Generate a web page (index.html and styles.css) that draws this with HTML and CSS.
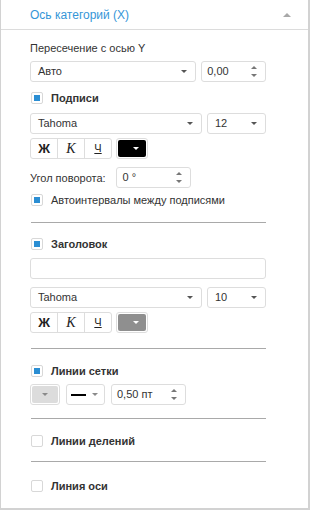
FILE: index.html
```html
<!DOCTYPE html>
<html lang="ru">
<head>
  <meta charset="UTF-8">
  <title>Ось категорий</title>
  <link rel="stylesheet" href="styles.css">
</head>
<body>
  <div class="panel">
    <div class="panel-header">
      <span class="panel-title">Ось категорий (X)</span>
      <span class="collapse-arrow"></span>
    </div>

    <div class="panel-body">
      <div class="label cross-label">Пересечение с осью Y</div>
      <div class="row row-cross">
        <div class="select select-wide">Авто</div>
        <div class="spinner spinner-cross">0,00</div>
      </div>

      <label class="check check-labels"><span class="box on"></span>Подписи</label>
      <div class="row row-font">
        <div class="select select-font">Tahoma</div>
        <div class="select select-size">12</div>
      </div>
      <div class="row row-style">
        <div class="style-group">
          <span class="style-btn bold">Ж</span>
          <span class="style-btn italic">К</span>
          <span class="style-btn under">Ч</span>
        </div>
        <div class="color-btn"><span class="swatch black"></span></div>
      </div>
      <div class="row row-angle">
        <span class="label">Угол поворота:</span>
        <div class="spinner spinner-angle">0 °</div>
      </div>
      <label class="check check-plain check-auto"><span class="box on"></span>Автоинтервалы между подписями</label>

      <div class="sep sep-1"></div>

      <label class="check check-title"><span class="box on"></span>Заголовок</label>
      <div class="text-input"></div>
      <div class="row row-font2">
        <div class="select select-font">Tahoma</div>
        <div class="select select-size">10</div>
      </div>
      <div class="row row-style">
        <div class="style-group">
          <span class="style-btn bold">Ж</span>
          <span class="style-btn italic">К</span>
          <span class="style-btn under">Ч</span>
        </div>
        <div class="color-btn"><span class="swatch grey"></span></div>
      </div>

      <div class="sep sep-2"></div>

      <label class="check check-grid"><span class="box on"></span>Линии сетки</label>
      <div class="row row-grid">
        <div class="color-btn color-small"><span class="swatch light"></span></div>
        <div class="line-btn"><span class="line-sample"></span></div>
        <div class="spinner spinner-width">0,50 пт</div>
      </div>

      <div class="sep sep-3"></div>

      <label class="check check-ticks"><span class="box"></span>Линии делений</label>

      <div class="sep sep-4"></div>

      <label class="check check-axis"><span class="box"></span>Линия оси</label>
    </div>
  </div>
</body>
</html>
```

FILE: styles.css
```css
body {
  margin: 0;
  background: #ffffff;
  font-family: "Liberation Sans", Arial, sans-serif;
  font-size: 11px;
  color: #333333;
}

.panel {
  width: 310px;
  height: 510px;
  box-sizing: border-box;
  border: 1px solid #d2d2d2;
  border-top: none;
  border-right-width: 2px;
  border-bottom-width: 2px;
}

.panel-header {
  height: 29px;
  border-bottom: 1px solid #dcdcdc;
  display: flex;
  align-items: center;
  justify-content: space-between;
  padding: 0 17px 0 29px;
}

.panel-title {
  color: #3596d8;
  font-size: 12px;
}

.collapse-arrow {
  width: 0;
  height: 0;
  border-left: 4px solid transparent;
  border-right: 4px solid transparent;
  border-bottom: 4px solid #a8a8a8;
}

.panel-body {
  display: flex;
  flex-direction: column;
  padding-left: 29px;
  width: 236px;
}

.label {
  line-height: 14px;
}

.cross-label { margin-top: 11px; }

.row {
  display: flex;
  align-items: center;
  gap: 5px;
}

.row-cross { margin-top: 6px; }
.row-font { margin-top: 8px; }
.row-font2 { margin-top: 8px; }
.row-style { margin-top: 4px; gap: 4px; }
.row-angle { margin-top: 8px; gap: 10px; }
.row-grid { margin-top: 6px; gap: 6px; }

.select,
.spinner,
.text-input {
  height: 21px;
  box-sizing: border-box;
  border: 1px solid #dddddd;
  border-radius: 3px;
  background: #ffffff;
  padding: 0 8px 0 7px;
  line-height: 19px;
  position: relative;
}

.select::after {
  content: "";
  position: absolute;
  right: 8px;
  top: 8px;
  border-left: 3px solid transparent;
  border-right: 3px solid transparent;
  border-top: 3px solid #555555;
}

.select-wide { width: 167px; }
.select-font { width: 172px; }
.select-size { width: 59px; }

.spinner { padding-left: 5px; }
.spinner::before,
.spinner::after {
  content: "";
  position: absolute;
  right: 8px;
  border-left: 3px solid transparent;
  border-right: 3px solid transparent;
}
.spinner::before {
  top: 4px;
  border-bottom: 3px solid #777777;
}
.spinner::after {
  bottom: 4px;
  border-top: 3px solid #777777;
}

.spinner-cross { width: 65px; }
.spinner-angle { width: 75px; padding-left: 6px; }
.spinner-width { width: 75px; padding-left: 5px; }

.check {
  display: flex;
  align-items: center;
  gap: 8px;
  line-height: 14px;
  font-weight: bold;
  color: #333333;
  padding-left: 1px;
}

.check-plain { font-weight: normal; }

.box {
  width: 12px;
  height: 12px;
  box-sizing: border-box;
  border: 1px solid #d8d8d8;
  border-radius: 2px;
  padding: 2px;
  background: #ffffff;
}

.box.on::before {
  content: "";
  display: block;
  width: 6px;
  height: 6px;
  background: #2b8ed3;
}

.check-labels { margin-top: 9px; }
.check-auto { margin-top: 5px; }
.check-title { margin-top: 14px; }
.check-grid { margin-top: 15px; }
.check-ticks { margin-top: 15px; }
.check-axis { margin-top: 17px; }

.text-input {
  width: 236px;
  margin-top: 7px;
}

.style-group {
  display: flex;
  border: 1px solid #dddddd;
  border-radius: 3px;
  height: 21px;
  box-sizing: border-box;
}

.style-btn {
  width: 26px;
  text-align: center;
  line-height: 19px;
  color: #222222;
}

.style-btn + .style-btn {
  border-left: 1px solid #dddddd;
}

.style-btn.bold {
  font-weight: bold;
  font-size: 13px;
}

.style-btn.italic {
  font-family: "Liberation Serif", "Times New Roman", serif;
  font-style: italic;
  font-size: 14px;
}

.style-btn.under {
  text-decoration: underline;
  font-size: 11px;
}

.color-btn {
  width: 32px;
  height: 21px;
  box-sizing: border-box;
  border: 1px solid #dddddd;
  border-radius: 3px;
  padding: 1px;
}

.color-small { width: 30px; }

.swatch {
  display: block;
  height: 100%;
  border-radius: 2px;
  position: relative;
}

.swatch::after {
  content: "";
  position: absolute;
  right: 7px;
  top: 7px;
  border-left: 3px solid transparent;
  border-right: 3px solid transparent;
  border-top: 3px solid #ffffff;
}

.swatch.black { background: #000000; }
.swatch.grey { background: #8f8f8f; }
.swatch.light { background: #dcdcdc; }
.swatch.light::after {
  right: 10px;
  border-top-color: #8a8a8a;
}

.line-btn {
  width: 39px;
  height: 21px;
  box-sizing: border-box;
  border: 1px solid #dddddd;
  border-radius: 3px;
  position: relative;
  display: flex;
  align-items: center;
  padding-left: 4px;
}

.line-sample {
  width: 15px;
  height: 2px;
  background: #000000;
}

.line-btn::after {
  content: "";
  position: absolute;
  right: 6px;
  top: 8px;
  border-left: 3px solid transparent;
  border-right: 3px solid transparent;
  border-top: 3px solid #8a8a8a;
}

.sep {
  height: 1px;
  background: #a9a9a9;
  width: 235px;
  margin-left: 1px;
}

.sep-1 { margin-top: 15px; }
.sep-2 { margin-top: 15px; }
.sep-3 { margin-top: 13px; }
.sep-4 { margin-top: 13px; }
```
